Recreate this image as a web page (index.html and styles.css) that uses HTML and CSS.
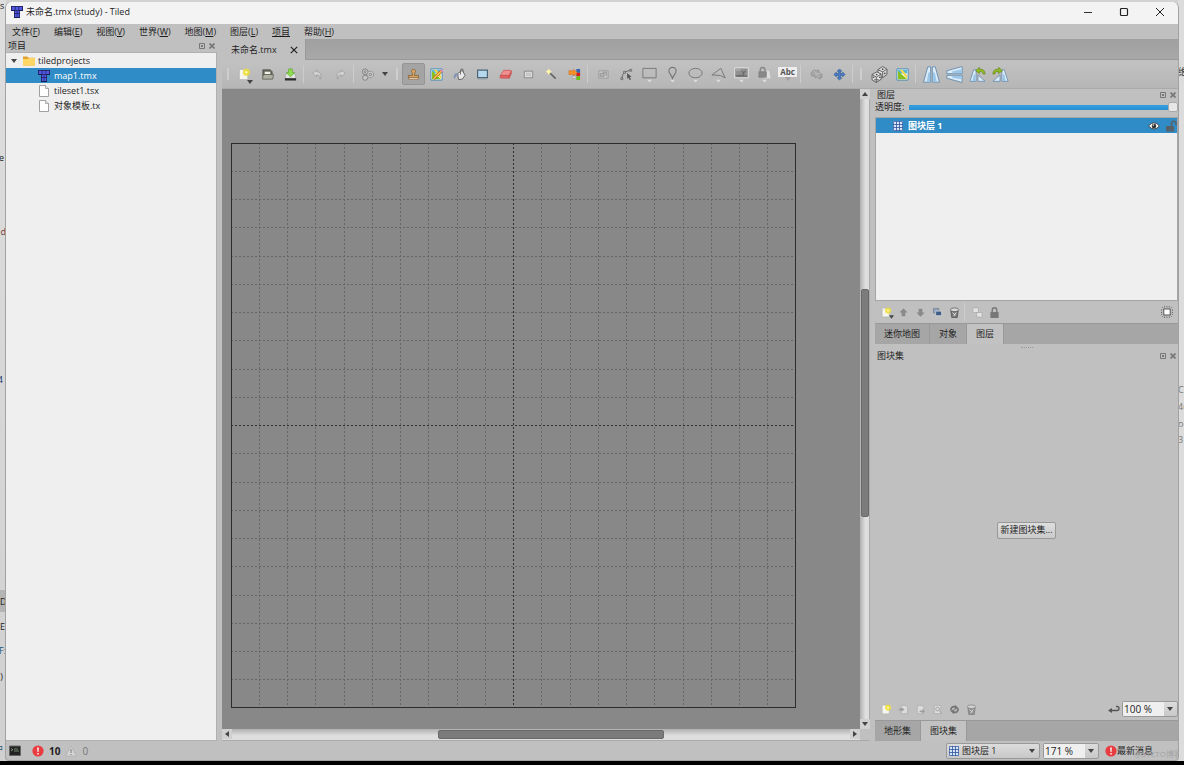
FILE: index.html
```html
<!DOCTYPE html>
<html lang="zh-CN">
<head>
<meta charset="utf-8">
<title>未命名.tmx (study) - Tiled</title>
<link rel="stylesheet" href="styles.css">
</head>
<body>
<svg class="defs" aria-hidden="true">
  <symbol id="logo" viewBox="0 0 12 12"><path fill="#1c1c4c" d="M0 0h12v5H9v7H3V5H0z"/><path fill="#5058e4" d="M.8.8h3v3.200h-3zM4.500.8h3v3.200h-3zM8.200.8h3v3.200h-3zM3.800 4.800h2v2.500h-2zM6.300 4.800h2v2.500h-2zM3.800 8h2v3h-2zM6.300 8h2v3h-2z"/></symbol>
  <symbol id="file" viewBox="0 0 10 12"><path fill="#fefefe" stroke="#8c8c8c" stroke-width=".8" d="M.5.5h6l3 3v8h-9z"/><path fill="#eee" stroke="#8c8c8c" stroke-width=".7" d="M6.500.5v3h3"/></symbol>
  <symbol id="folder" viewBox="0 0 12 9"><path fill="#e0a22e" d="M0 0h4l1.500 1.300H12V9H0z"/><path fill="#ffd666" d="M0 2.500h5l1-1h6V9H0z"/></symbol>
  <symbol id="dock" viewBox="0 0 6 6"><path fill="none" stroke="#777" d="M.5.5h5v5h-5z"/><path fill="#777" d="M2 2h2v2H2z"/></symbol>
  <symbol id="close" viewBox="0 0 6 6"><path fill="none" stroke="#777" stroke-width="1.700" d="M.5.5l5 5M5.500.5l-5 5"/></symbol>
  <symbol id="down" viewBox="0 0 6 4"><path fill="#444" d="M0 0h6L3 4z"/></symbol>
  <symbol id="new" viewBox="0 0 14 14"><path fill="#f6f6ef" stroke="#aaa" stroke-width=".6" d="M1.500 1.500h9v11h-9z"/><circle cx="9" cy="4.500" r="4" fill="#eee040" opacity=".75"/><circle cx="9" cy="4.500" r="2" fill="#fffcc8" stroke="#e8d400"/></symbol>
  <symbol id="dice" viewBox="0 0 16 16"><g fill="#e2e2e2" stroke="#5a5a5a" stroke-width=".9" stroke-linejoin="round"><path d="M6.500 3.500l4.500-3 4 2.500v5l-4 3-4.500-2.500z"/><path d="M6.500 3.500l4.500 2 4-2.500M11 5.500V11" fill="none"/><path d="M1 8l4.500-2.500 4 2v5l-4.500 3-4-2.500z"/><path d="M1 8l4 2.500 4.500-3M5 10.500v5" fill="none"/></g><g fill="#444"><circle cx="11" cy="3" r=".8"/><circle cx="13" cy="7" r=".8"/><circle cx="5.300" cy="8" r=".8"/><circle cx="2.500" cy="10.500" r=".7"/><circle cx="3.800" cy="13" r=".7"/><circle cx="6.500" cy="13" r=".7"/><circle cx="8.200" cy="10.500" r=".7"/></g></symbol>
  <symbol id="terrain" viewBox="0 0 14 14"><path fill="#fff" stroke="#3f87b8" d="M1 1h12v12H1z"/><path fill="#58b8d8" d="M2 2h10v4H2z"/><path fill="#88c020" d="M2 3l10 9H2z"/><path fill="#f2d84c" d="M4 2h3l5 6v4z"/></symbol>
  <symbol id="tilegrid" viewBox="0 0 12 12"><path fill="#d8e4f8" d="M0 0h12v12H0z"/><path fill="none" stroke="#35599e" d="M.5.5h11v11H.5zM4.200 0v12M7.800 0v12M0 4.200h12M0 7.800h12"/></symbol>
  <symbol id="trash" viewBox="0 0 12 12"><path fill="#777" stroke="#444" stroke-width=".7" d="M2 4h8l-1 7.500H3z"/><ellipse cx="6" cy="3" rx="4.500" ry="2" fill="#ddd" stroke="#555" stroke-width=".8"/><path stroke="#eee" fill="none" d="M4 6l3 3M8 6l-3 4"/></symbol>
  <symbol id="error" viewBox="0 0 12 12"><circle cx="6" cy="6" r="5.600" fill="#e83c40"/><path fill="#fff" d="M5.200 2.500h1.600l-.3 4.500h-1zM5.300 8h1.400v1.400H5.300z"/></symbol>
  <symbol id="flip" viewBox="0 0 16 16"><path fill="#dcecf9" stroke="#5f87aa" stroke-width=".8" d="M7.200.8v14.400H.5L4.500.8zM8.800.8v14.400h6.700L11.500.8z"/><path fill="#9cc6e8" d="M5 6h1.800v8.800H3.500zM9.200 6H11l2 8.800H9.200z"/></symbol>
  <symbol id="rotate" viewBox="0 0 18 16"><path fill="#dcecf9" stroke="#5f87aa" stroke-width=".8" d="M7.500 3v12.200H1L5 3zM9.500 8.500v6.700h7.500z"/><path fill="#9cc6e8" d="M5 8h2v6.800H3.500z"/><path fill="#91bd20" stroke="#567c08" stroke-width=".6" d="M7 4l4-3.500v2c4-.5 6 1.500 6 5h-2c0-2-1.500-3-4-2.500v2z"/></symbol>
  <symbol id="undoarrow" viewBox="0 0 12 12"><path fill="#d4d4d4" stroke="#8e8e8e" stroke-width=".6" d="M1 4.500L5 1v2c4.500 0 6 4 4 8 0-3-1-5-4-4.500V8.500z"/></symbol>
</svg>

<div class="behind behind-left" aria-hidden="true">
  <span class="b1">s</span><span class="b2">e</span><span class="b3">d</span><span class="b4">4</span><span class="b5">D</span><span class="b6">E</span><span class="b7">F:</span><span class="b8">)</span><span class="b9">中</span>
</div>
<div class="behind behind-right" aria-hidden="true">
  <span class="r1">维</span><span class="r2">CT</span><span class="r3">46</span><span class="r4">or</span><span class="r5">3</span>
</div>

<div class="window">
  <header class="titlebar">
    <svg class="i12"><use href="#logo"/></svg>
    <h1>未命名.tmx (study) - Tiled</h1>
    <button aria-label="最小化"><svg class="i10" viewBox="0 0 10 10"><path d="M1 5.500h8" stroke="#333"/></svg></button>
    <button aria-label="最大化"><svg class="i10" viewBox="0 0 10 10"><rect x="1.500" y="1.500" width="7" height="7" rx="1" fill="none" stroke="#222" stroke-width="1.200"/></svg></button>
    <button aria-label="关闭"><svg class="i10" viewBox="0 0 10 10"><path d="M1 1l8 8M9 1L1 9" stroke="#222"/></svg></button>
  </header>
  <nav class="menubar">
    <button>文件(<u>F</u>)</button><button>编辑(<u>E</u>)</button><button>视图(<u>V</u>)</button><button>世界(<u>W</u>)</button><button>地图(<u>M</u>)</button><button>图层(<u>L</u>)</button><button><u>项目</u></button><button>帮助(<u>H</u>)</button>
  </nav>

  <div class="main">
    <aside class="project">
      <div class="dock-title"><h2>项目</h2><button aria-label="浮动"><svg><use href="#dock"/></svg></button><button aria-label="关闭"><svg><use href="#close"/></svg></button></div>
      <ul class="tree">
        <li><svg class="caret"><use href="#down"/></svg><svg class="i12"><use href="#folder"/></svg>tiledprojects</li>
        <li class="child selected"><svg class="i12"><use href="#logo"/></svg>map1.tmx</li>
        <li class="child"><svg class="i12"><use href="#file"/></svg>tileset1.tsx</li>
        <li class="child"><svg class="i12"><use href="#file"/></svg>对象模板.tx</li>
      </ul>
    </aside>

    <section class="work">
      <div class="doc-tabs"><div class="doc-tab">未命名.tmx<button aria-label="关闭"><svg viewBox="0 0 8 8"><path d="M.8.8l6.400 6.400M7.200.8L.8 7.200" stroke="#222" stroke-width="1.200"/></svg></button></div></div>

      <div class="toolbar">
        <i class="handle"></i>
        <button class="tool" aria-label="新建"><svg><use href="#new"/></svg><svg class="corner"><use href="#down"/></svg></button>
        <button class="tool" aria-label="打开"><svg viewBox="0 0 14 14"><path fill="#6a6b60" stroke="#494a42" stroke-width=".8" d="M2 2h8l2 2v5H2z"/><path fill="#f0f0e8" d="M4 4h6v3H4z"/><path fill="#aeb0a2" stroke="#55564c" stroke-width=".8" d="M1.500 12l1-5h11l-1 5z"/></svg></button>
        <button class="tool" aria-label="保存"><svg viewBox="0 0 14 14"><path fill="#e8e8e8" stroke="#999" stroke-width=".6" d="M2.500 6h9l1.500 5H1z"/><path fill="#2d2d2d" d="M1 11h12v2.500H1z"/><path fill="#8fdc50" stroke="#5aa428" stroke-width=".7" d="M5 1h4v4h2.500L7 9.500 2.500 5H5z"/></svg></button>
        <i class="sep"></i>
        <button class="tool" aria-label="撤销"><svg class="i12"><use href="#undoarrow"/></svg></button>
        <button class="tool" aria-label="重做"><svg class="i12 mirror"><use href="#undoarrow"/></svg></button>
        <i class="sep"></i>
        <button class="tool" aria-label="命令"><svg viewBox="0 0 14 14"><g fill="#c9c9c9" stroke="#777" stroke-width=".9"><circle cx="4.500" cy="4" r="3"/><circle cx="4.500" cy="10.500" r="2.700"/><circle cx="10" cy="7" r="3.500" stroke-dasharray="1.500 .7"/><circle cx="10" cy="7" r="1.300"/><circle cx="4.500" cy="4" r="1"/></g></svg></button>
        <button class="tool narrow" aria-label="命令菜单"><svg class="arrow"><use href="#down"/></svg></button>
        <i class="handle"></i>
        <button class="tool on" aria-label="图章刷"><svg viewBox="0 0 14 14"><path fill="#d9a562" stroke="#80592b" stroke-width=".8" d="M7 1.500a2 2 0 0 1 1.500 3.500L8 8h4.500v2.500h-11V8H6L5.500 5A2 2 0 0 1 7 1.500z"/><path fill="#f2e3cb" stroke="#80592b" stroke-width=".6" d="M2 10.500h10v1.800H2z"/></svg></button>
        <button class="tool" aria-label="地形刷"><svg viewBox="0 0 14 14"><use href="#terrain"/><path stroke="#a45c12" stroke-width="3" d="M4 11.500L12.500 3"/><path stroke="#ffc251" stroke-width="1.800" d="M4 11.500L12 3.500"/><path stroke="#e88ad0" stroke-width="2.500" d="M12 3.500L13.500 2"/></svg></button>
        <button class="tool" aria-label="填充"><svg viewBox="0 0 14 14"><path fill="#e9e9e9" stroke="#555" stroke-width=".9" d="M5 6l5-3.500 3 5.500-3 4-4 .5z"/><path fill="none" stroke="#666" d="M8 7V2.500c0-2 3-2 3 0V4"/><path fill="#8296b4" d="M5 5.500C1 5.500 0 9 1.500 12 3 11 2.500 8 6 7.500z"/></svg></button>
        <button class="tool" aria-label="矩形"><svg viewBox="0 0 14 14"><path fill="#b5d8ec" stroke="#4c6476" stroke-width="1.300" d="M1.700 2.200h10.600v8.100H1.700z"/><path stroke="#8b9ba5" d="M2 11.800h10"/></svg></button>
        <button class="tool" aria-label="橡皮擦"><svg viewBox="0 0 14 14"><path fill="#ef8f8f" stroke="#cc5555" stroke-width=".8" d="M5 2.500h7.500q1 0 .6 1L11 8H1.500z"/><path fill="#e06262" stroke="#c44a4a" stroke-width=".6" d="M1.500 8H11v3H2q-1 0-.9-1zM11 8l2.300-4.500V6.500L11 11z"/></svg></button>
        <button class="tool" aria-label="矩形选择"><svg viewBox="0 0 14 14"><path fill="#c8c8c8" stroke="#808080" d="M2.500 3.500h9v7h-9z"/><path fill="none" stroke="#e4e4e4" stroke-width=".8" d="M3.500 4.500h7v5h-7z"/></svg></button>
        <button class="tool" aria-label="魔术棒"><svg viewBox="0 0 14 14"><path stroke="#666" stroke-width="1.800" d="M5.500 5.500l6 6"/><circle cx="4" cy="4" r="2.300" fill="#f5e98c"/><path stroke="#fffbd0" stroke-width=".8" d="M4 1v6M1 4h6"/></svg></button>
        <button class="tool" aria-label="同图块选择"><svg viewBox="0 0 14 14"><path fill="#2f67b4" d="M9 1h4v4H9z"/><path fill="#d71a1a" d="M9 5h4v4H9z"/><path fill="#66c512" d="M9 9h4v4H9z"/><path fill="#f79229" stroke="#ce681c" stroke-width=".6" d="M1 3h5V1.500L10 5 6 8.500V7H1z"/><path fill="#ddd" stroke="#888" stroke-width=".5" d="M5 8.500h3.500v3H5z"/></svg></button>
        <i class="sep wide"></i>
        <button class="tool dim" aria-label="选择对象"><svg viewBox="0 0 14 14"><path fill="#ccc" stroke="#888" d="M2 3h10v8H2z"/><path fill="#bbb" stroke="#777" d="M3.500 6h4v3h-4zM6 4.500h4v4"/></svg></button>
        <button class="tool" aria-label="编辑多边形"><svg viewBox="0 0 14 14"><path fill="none" stroke="#666" d="M2 12c0-4 2-7 4-8l5-1.500"/><path fill="#ddd" stroke="#555" stroke-width=".8" d="M1 10.500h2v2H1zM4 3.500h2v2H4zM10.500 1.500h2v2h-2z"/><path fill="#555" d="M7.500 5.500l5 4-2 .3 1.300 2.700-1.300.6L9.300 10.500l-1.500 1z"/></svg></button>
        <button class="tool big" aria-label="插入矩形"><svg viewBox="0 0 16 18"><path fill="none" stroke="#777" d="M1 2.500h14v10H1z"/><path fill="#ddd" d="M5.500 14.500h5L8 17.500z"/></svg></button>
        <button class="tool big" aria-label="插入点"><svg viewBox="0 0 16 18"><path fill="none" stroke="#777" stroke-width="1.200" d="M8 13C7 9.500 4.200 8 4.200 5.300a3.800 3.800 0 0 1 7.600 0C11.800 8 9 9.500 8 13z"/><path fill="#ddd" d="M5.500 14.500h5L8 17.500z"/></svg></button>
        <button class="tool big" aria-label="插入椭圆"><svg viewBox="0 0 16 18"><ellipse cx="8" cy="7.500" rx="7" ry="5" fill="none" stroke="#777"/><path fill="#ddd" d="M5.500 14.500h5L8 17.500z"/></svg></button>
        <button class="tool big" aria-label="插入多边形"><svg viewBox="0 0 16 18"><path fill="none" stroke="#777" d="M1 9.500L10.500 2.500l4.500 10-5-2.500z"/><path fill="#ddd" d="M5.500 14.500h5L8 17.500z"/></svg></button>
        <button class="tool big" aria-label="插入图块"><svg viewBox="0 0 16 18"><path fill="#909090" stroke="#e4e4e4" d="M.8 2h14.400v10.500H.8z"/><path fill="#aaa" d="M2 3h5v2H2z"/><path fill="#6c6c6c" d="M2 11.500V10l5-1 2 1V7L7 5l3 1 3-1.500-2 3V10h3v1.500z"/><path fill="#ddd" d="M5.500 14.500h5L8 17.500z"/></svg></button>
        <button class="tool big" aria-label="插入模板"><svg viewBox="0 0 16 18"><path fill="#ddd" d="M9 5h4l1.500 8H7z"/><path fill="#888" stroke="#777" stroke-width=".6" d="M2 6h8v6H2z"/><path fill="none" stroke="#888" stroke-width="1.500" d="M3.500 6V4c0-3.300 5-3.300 5 0v2"/><path fill="#ddd" d="M5.500 14.500h5L8 17.500z"/></svg></button>
        <button class="tool text-tool" aria-label="插入文本"><b>Abc</b><svg class="arrow"><use href="#down"/></svg></button>
        <i class="sep wide"></i>
        <button class="tool dim" aria-label="世界工具"><svg viewBox="0 0 14 14"><path fill="#999" stroke="#666" stroke-width=".7" d="M1 6l3-4 3 1 2-1 2 4 2 1v3l-3 2-2-3-2 2-2-3-2 1z"/><path fill="none" stroke="#ccc" stroke-width=".7" d="M4 2l2 4 5 0M6 6l3 4"/></svg></button>
        <button class="tool" aria-label="移动图层"><svg viewBox="0 0 14 14"><path fill="#4b7fc6" stroke="#254f8e" stroke-width=".6" d="M7 1l2.500 2.500H8V6h2.500V4.500L13 7l-2.500 2.500V8H8v2.500h1.500L7 13l-2.500-2.500H6V8H3.500v1.500L1 7l2.500-2.500V6H6V3.500H4.500z"/></svg></button>
        <i class="sep"></i><i class="handle roomy"></i>
        <button class="tool big" aria-label="随机"><svg><use href="#dice"/></svg></button>
        <button class="tool" aria-label="地形填充"><svg><use href="#terrain"/></svg></button>
        <i class="sep wide"></i>
        <button class="tool big" aria-label="水平翻转"><svg><use href="#flip"/></svg></button>
        <button class="tool big" aria-label="垂直翻转"><svg class="turn"><use href="#flip"/></svg></button>
        <button class="tool big" aria-label="向左旋转"><svg><use href="#rotate"/></svg></button>
        <button class="tool big" aria-label="向右旋转"><svg class="mirror"><use href="#rotate"/></svg></button>
      </div>

      <div class="panes">
        <div class="viewport">
          <div class="canvas">
            <svg class="map" viewBox="0 0 20 20">
              <path class="grid" d="M1 0V20M2 0V20M3 0V20M4 0V20M5 0V20M6 0V20M7 0V20M8 0V20M9 0V20M11 0V20M12 0V20M13 0V20M14 0V20M15 0V20M16 0V20M17 0V20M18 0V20M19 0V20M0 1H20M0 2H20M0 3H20M0 4H20M0 5H20M0 6H20M0 7H20M0 8H20M0 9H20M0 11H20M0 12H20M0 13H20M0 14H20M0 15H20M0 16H20M0 17H20M0 18H20M0 19H20"/>
              <path class="grid major" d="M10 0V20M0 10H20"/>
            </svg>
          </div>
          <div class="vbar"><button aria-label="上"><svg class="flipy"><use href="#down"/></svg></button><i class="thumb"></i><button aria-label="下"><svg><use href="#down"/></svg></button></div>
          <div class="hbar"><button aria-label="左"><svg class="left"><use href="#down"/></svg></button><i class="thumb"></i><button aria-label="右"><svg class="right"><use href="#down"/></svg></button></div>
        </div>

        <aside class="side">
          <section class="layers">
            <div class="dock-title"><h2>图层</h2><button aria-label="浮动"><svg><use href="#dock"/></svg></button><button aria-label="关闭"><svg><use href="#close"/></svg></button></div>
            <div class="opacity"><label for="opacity">透明度:</label><input id="opacity" type="range" value="100"></div>
            <ul class="layer-list"><li><svg class="i10"><use href="#tilegrid"/></svg><b>图块层 1</b>
              <svg class="i12" viewBox="0 0 12 12"><path fill="#fff" stroke="#444" d="M.5 6Q6-.5 11.500 6 6 12 .5 6z"/><circle cx="6" cy="6" r="2.300" fill="#333"/><circle cx="5.300" cy="5" r=".7" fill="#fff"/></svg>
              <svg class="i12" viewBox="0 0 12 12"><path fill="#57616a" d="M1 6h8v5.500H1z"/><path fill="none" stroke="#57616a" stroke-width="1.600" d="M6.500 6V3.500c0-3 4.500-3 4.500 0V5"/></svg>
            </li></ul>
            <div class="minibar">
              <button aria-label="新建图层"><svg><use href="#new"/></svg><svg class="corner"><use href="#down"/></svg></button>
              <button aria-label="上移"><svg viewBox="0 0 12 12"><path fill="#898989" d="M6 1.500L10.500 6H8v4H4V6H1.500z"/></svg></button>
              <button aria-label="下移"><svg viewBox="0 0 12 12"><path fill="#898989" d="M6 10.500L10.500 6H8V2H4v4H1.500z"/></svg></button>
              <button aria-label="复制"><svg viewBox="0 0 12 12"><path fill="#8ba2c2" stroke="#666" stroke-width=".5" d="M1.500 1.500h6v5h-6z"/><path fill="#3f5c88" stroke="#ddd" stroke-width=".8" d="M4 4.500h6.500v5H4z"/></svg></button>
              <button aria-label="删除"><svg><use href="#trash"/></svg></button>
              <i class="sep wide"></i>
              <button aria-label="显示其他"><svg viewBox="0 0 12 12"><path fill="#e3e3e3" stroke="#a0a0a0" stroke-width=".6" d="M1 1h6v5H1zM5 6h6v5H5z"/></svg></button>
              <button aria-label="锁定其他"><svg viewBox="0 0 12 12"><path fill="#777" d="M1.500 5.500h9V12h-9z"/><path fill="none" stroke="#777" stroke-width="1.500" d="M3.500 6V3.500c0-3.500 5-3.500 5 0V6"/></svg></button>
              <button class="end" aria-label="高亮"><svg viewBox="0 0 12 12"><path fill="#fff" stroke="#333" stroke-width=".8" d="M2.800 3h6.400v6H2.800z"/><path fill="none" stroke="#444" stroke-width=".9" stroke-dasharray="1 1.400" d="M3 .8h6.500M3 11.200h6.500M.6 3.500V9M11.400 3.500V9M1.500 1.500l1 1M10.500 1.500l-1 1M1.500 10.500l1-1M10.500 10.500l-1-1"/></svg></button>
            </div>
            <div class="dock-tabs" role="tablist"><button role="tab">迷你地图</button><button role="tab">对象</button><button role="tab" class="active">图层</button></div>
          </section>
          <div class="grip"><i></i></div>
          <section class="tilesets">
            <div class="dock-title"><h2>图块集</h2><button aria-label="浮动"><svg><use href="#dock"/></svg></button><button aria-label="关闭"><svg><use href="#close"/></svg></button></div>
            <div class="empty"><button class="push">新建图块集...</button></div>
            <div class="minibar">
              <button aria-label="新建图块集"><svg><use href="#new"/></svg></button>
              <button class="dim" aria-label="嵌入"><svg viewBox="0 0 12 12"><path fill="#eee" stroke="#999" stroke-width=".7" d="M3.500 1.500h5l2 2v7h-7z"/><path fill="#888" d="M1 5h3V3.500L7 6 4 8.500V7H1z"/></svg></button>
              <button class="dim" aria-label="导出"><svg viewBox="0 0 12 12"><path fill="#eee" stroke="#999" stroke-width=".7" d="M2.500 1.500h5l2 2v7h-7z"/><path fill="#888" d="M5 7h3V5.500L11 8l-3 2.500V9H5z"/></svg></button>
              <button class="dim" aria-label="编辑图块集"><svg viewBox="0 0 12 12"><path fill="#eee" stroke="#999" stroke-width=".7" d="M2.500 1.500h7v9h-7z"/><circle cx="6" cy="5.500" r="2" fill="none" stroke="#888"/><path stroke="#888" d="M7.500 7l3 3.500"/></svg></button>
              <button aria-label="替换"><svg viewBox="0 0 12 12"><path fill="none" stroke="#777" stroke-width="2" d="M2 7c0-4 3-5 6-3.500M10 5c0 4-3 5-6 3.500"/><path fill="#777" d="M6.500.8l4 3.700-4.500 1.700zM5.500 11.200l-4-3.700L6 5.800z"/></svg></button>
              <button class="dim" aria-label="删除"><svg><use href="#trash"/></svg></button>
              <button class="end" aria-label="换行"><svg viewBox="0 0 12 12"><path fill="none" stroke="#555" stroke-width="1.300" d="M3 7.500h6q2 0 2-2T9 3.500H8"/><path fill="#555" d="M0 7.500L4 5v5z"/></svg></button>
              <span class="combo zoom"><select aria-label="图块缩放"><option>100 %</option></select><svg class="arrow"><use href="#down"/></svg></span>
            </div>
            <div class="dock-tabs" role="tablist"><button role="tab">地形集</button><button role="tab" class="active">图块集</button></div>
          </section>
        </aside>
      </div>
    </section>
  </div>

  <footer class="status">
    <svg class="i12" viewBox="0 0 12 12"><path fill="#222" stroke="#666" d="M.5 1h11v9.500H.5z"/><path fill="none" stroke="#9ab09a" stroke-width=".7" d="M2 3.500l2 1.200-2 1.300M5 4h4M5 6h5"/></svg>
    <button class="issues"><svg class="i12"><use href="#error"/></svg><b>10</b><svg class="i12 faint" viewBox="0 0 12 12"><path fill="#ddd" stroke="#aaa" stroke-width=".8" d="M6 1l5.500 10H.5z"/><path fill="#777" d="M5.400 4h1.200v4H5.400zM5.400 9h1.200v1H5.400z"/></svg><span>0</span></button>
    <span class="combo layer"><svg class="i10 lead"><use href="#tilegrid"/></svg><select aria-label="当前图层"><option>图块层 1</option></select><svg class="arrow"><use href="#down"/></svg></span>
    <span class="combo zoom"><select aria-label="缩放"><option>171 %</option></select><svg class="arrow"><use href="#down"/></svg></span>
    <button class="news"><svg class="i12"><use href="#error"/></svg>最新消息</button>
    <small>@51CTO博客</small>
  </footer>
</div>
</body>
</html>
```
FILE: styles.css
```css
* { box-sizing: border-box; }
html, body { height: 100%; }
body {
  margin: 0;
  overflow: hidden;
  position: relative;
  padding: 2px 5px 0;
  background: #d2d2d2;
  color: #1e1e1e;
  font: 9px/12px "Open Sans", "Noto Sans CJK SC", sans-serif;
  border-bottom: 4px solid #000;
}
h1, h2, ul { margin: 0; padding: 0; font: inherit; list-style: none; }
button, select, input { font: inherit; color: inherit; margin: 0; }
button { border: 0; padding: 0; background: none; white-space: nowrap; }
svg { display: block; flex: none; }
.defs { position: absolute; width: 0; height: 0; }
.i12 { width: 12px; height: 12px; }
.i10 { width: 10px; height: 10px; }
.mirror { transform: scaleX(-1); }
.flipy { transform: scaleY(-1); }
.turn { transform: rotate(-90deg); }
.left { transform: rotate(90deg); }
.right { transform: rotate(-90deg); }
.dim { opacity: 0.6; }

/* Windows lying behind the editor */
.behind { position: absolute; top: 0; bottom: 0; width: 6px; overflow: hidden; }
.behind-left { left: 0; background: linear-gradient(#dedede, #d0d0d0); }
.behind-right { right: 0; background: #dcdcdc; color: #777; }
.behind span { position: absolute; white-space: nowrap; }
.b1 { top: 0; left: 0; }
.b2 { top: 152px; right: 2px; }
.b3 { top: 226px; right: 0; color: #633; }
.b4 { top: 374px; right: 3px; color: #136; }
.b5 { top: 590px; left: 0; height: 22px; width: 6px; line-height: 24px; background: #b4b4b4; }
.b6 { top: 621px; left: 0; }
.b7 { top: 645px; right: 0; color: #257; }
.b8 { top: 671px; right: 3px; }
.b9 { top: 743px; right: 3px; color: #257; }
.r1 { top: 66px; left: 0; color: #333; }
.r2 { top: 384px; left: 0; }
.r3 { top: 401px; left: 0; }
.r4 { top: 418px; left: 0; }
.r5 { top: 434px; left: 0; }

.window {
  position: relative;
  height: 100%;
  display: flex;
  flex-direction: column;
  background: #c0c0c0;
  border: 1px solid #a2a2a2;
  border-width: 0 1px 1px;
  border-radius: 6px 6px 4px 4px;
  overflow: hidden;
}
.titlebar { display: flex; align-items: center; height: 22px; flex: none; padding: 0 0 2px 5px; background: #f3f3f3; }
.titlebar h1 { flex: 1; padding-left: 3px; }
.titlebar button { width: 36px; height: 20px; display: grid; place-items: center; }
.menubar { display: flex; align-items: center; gap: 14px; height: 15px; flex: none; padding-left: 6px; background: #c0c0c0; }
.main { flex: 1; min-height: 0; display: flex; gap: 5px; }

.project { width: 211px; display: flex; flex-direction: column; }
.dock-title { display: flex; align-items: center; gap: 4px; height: 12px; padding: 0 2px; flex: none; }
.dock-title h2 { flex: 1; }
.dock-title svg { width: 6px; height: 6px; }
.project .dock-title { height: 13px; }
.tree { flex: 1; background: #efefef; border: 1px solid #b0b0b0; border-width: 1px 1px 1px 0; }
.tree li { display: flex; align-items: center; gap: 3px; height: 15px; padding-left: 5px; }
.tree li.child { padding-left: 32px; }
.tree .child svg { margin-right: 1px; }
.tree .caret { width: 6px; height: 4px; margin-right: 3px; }
.tree .selected { background: #308cc6; color: #fff; }

.work { flex: 1; min-width: 0; display: flex; flex-direction: column; }
.doc-tabs { display: flex; height: 21px; flex: none; background: linear-gradient(#a0a0a0, #a8a8a8); border-bottom: 1px solid #999; }
.doc-tab { display: flex; align-items: center; gap: 13px; height: 21px; padding: 0 7px 0 9px; background: #c0c0c0; border-right: 1px solid #999; }
.doc-tab svg { width: 8px; height: 8px; }

.toolbar { display: flex; align-items: center; height: 29px; flex: none; background: linear-gradient(#c2c2c2, #b6b6b6); border-bottom: 1px solid #aaa; }
.tool { width: 23px; height: 22px; flex: none; display: grid; place-items: center; position: relative; }
.tool svg { width: 13px; height: 13px; }
.tool.big svg { width: 17px; height: 17px; }
.tool.narrow { width: 12px; }
.tool.on { background: #a4a4a4; border: 1px solid #949494; border-radius: 2px; }
svg.corner { position: absolute; right: 3px; bottom: 1px; }
.tool svg.corner, .tool svg.arrow { width: 6px; height: 4px; }
.tool svg.i12 { width: 11px; height: 11px; }
.text-tool { align-content: center; }
.text-tool b { padding: 0 2px; background: #eee; color: #555; font-size: 8px; line-height: 10px; }
.text-tool .arrow { opacity: 0.2; }
.handle { width: 11px; height: 12px; flex: none; background: linear-gradient(#cecece, #cecece) 5px 0 / 2px 100% no-repeat; }
.handle.roomy { width: 13px; }
.sep { width: 4px; height: 18px; flex: none; background: linear-gradient(#cdcdcd, #cdcdcd) 1px 0 / 1px 100% no-repeat; }
.sep.wide { width: 6px; }

.panes { flex: 1; min-height: 0; display: flex; gap: 5px; }
.viewport { flex: 1; min-width: 0; display: grid; grid-template: 1fr 11px / 1fr 10px; border-bottom: 1px solid #aaa; }
.canvas { min-width: 0; min-height: 0; overflow: hidden; padding: 54px 0 0 9px; background: #888; }
.map { width: 565px; height: 565px; outline: 1px solid #2c2c2c; outline-offset: -1px; }
.grid { fill: none; stroke: #666; stroke-width: 1px; stroke-dasharray: 2 2; vector-effect: non-scaling-stroke; shape-rendering: crispEdges; }
.grid.major { stroke: #303030; }
.vbar, .hbar { display: flex; }
.vbar { flex-direction: column; background: linear-gradient(90deg, #b0b0b0, #dedede 60%); border-right: 1px solid #aaa; }
.hbar { background: linear-gradient(#b0b0b0, #dedede 60%); }
.vbar button, .hbar button { width: 10px; height: 10px; display: grid; place-items: center; background: #d0d0d0; flex: none; }
.vbar button svg, .hbar button svg { width: 6px; height: 4px; }
.thumb { background: #7b7b7b; border: 1px solid #696969; border-radius: 2px; }
.vbar .thumb { margin: 190px 0 auto 1px; height: 228px; }
.hbar .thumb { margin: 1px auto 1px 206px; width: 226px; }

.side { width: 303px; display: flex; flex-direction: column; }
.layers { flex: none; }
.opacity { display: flex; align-items: center; gap: 5px; height: 12px; }
.opacity input { flex: 1; min-width: 0; height: 12px; appearance: none; background: linear-gradient(#35a0e2, #2c8fcf) 0 4px / 100% 5px no-repeat; }
.opacity input::-webkit-slider-thumb { appearance: none; width: 10px; height: 10px; background: #e6e6e6; border: 1px solid #aaa; border-radius: 2px; }
.layer-list { height: 184px; margin-top: 4px; border: 1px solid #a5a5a5; background: #efefef; }
.layer-list li { display: flex; align-items: center; gap: 5px; height: 15px; padding-left: 17px; background: #308cc6; color: #fff; }
.layer-list b { flex: 1; }
.minibar { display: flex; align-items: center; height: 22px; padding: 0 3px; flex: none; }
.minibar button { width: 17px; height: 16px; display: grid; place-items: center; position: relative; }
.minibar button svg { width: 11px; height: 11px; }
.minibar button svg.corner { width: 5px; height: 4px; right: 1px; }
.minibar .end { margin-left: auto; }
.minibar .end svg { width: 12px; height: 12px; }
.dock-tabs { display: flex; height: 21px; flex: none; background: #a6a6a6; border-top: 1px solid #999; }
.dock-tabs button { padding: 0 9px; border-right: 1px solid #999; }
.dock-tabs .active { background: #c2c2c2; }
.grip { height: 6px; flex: none; display: grid; place-items: center; }
.grip i { width: 12px; border-top: 1px dotted #999; }
.tilesets { flex: 1; min-height: 0; display: flex; flex-direction: column; }
.empty { flex: 1; display: grid; place-items: center; }
.push { height: 17px; padding: 0 2px; border: 1px solid #999; border-radius: 2px; background: linear-gradient(#dedede, #cacaca); }
.tilesets .minibar { padding-right: 0; }

.combo { position: relative; display: flex; align-items: center; height: 16px; border: 1px solid #999; border-radius: 2px; background: linear-gradient(#dcdcdc, #c8c8c8); }
.combo select { appearance: none; width: 100%; height: 14px; padding: 0 0 0 3px; border: 0; background: transparent; line-height: 12px; }
.combo .arrow { position: absolute; right: 4px; width: 6px; height: 4px; }
.combo.zoom { width: 56px; }
.combo.zoom select { width: 41px; padding-left: 1px; background: #efefef; font-size: 10px; }
.combo.layer { width: 94px; padding-left: 2px; margin-left: auto; }
.status { display: flex; align-items: center; gap: 3px; height: 19px; flex: none; padding-left: 3px; }
.issues, .news { display: flex; align-items: center; }
.issues { gap: 5px; margin-left: 8px; font-size: 10px; color: #777; }
.issues b { color: #1e1e1e; }
.faint { opacity: 0.7; }
.news { margin-left: 3px; }
.status small { align-self: flex-end; margin-left: -22px; width: 44px; overflow: hidden; white-space: nowrap; font-size: 8px; color: #a4a4a4; }
```
